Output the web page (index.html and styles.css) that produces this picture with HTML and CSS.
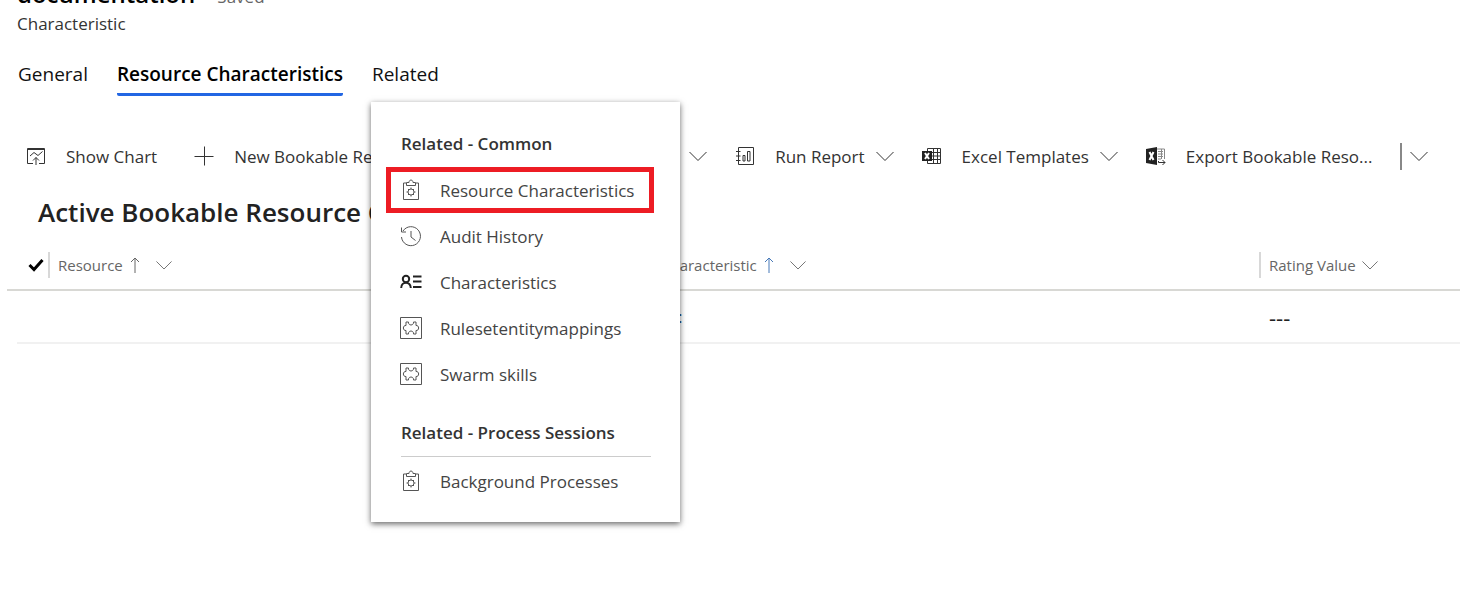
FILE: index.html
```html
<!DOCTYPE html>
<html lang="en">
<head>
<meta charset="utf-8">
<title>Characteristic</title>
<link rel="stylesheet" href="styles.css">
</head>
<body>
<svg class="defs" aria-hidden="true">
  <symbol id="chevron" viewBox="0 0 18 18"><path d="M.5 5l8.500 8.500L17.500 5"/></symbol>
  <symbol id="arrow-up" viewBox="0 0 10 18"><path d="M5 17V2M1 6l4-4 4 4"/></symbol>
  <symbol id="clipboard" viewBox="0 0 22 22"><path d="M6 4H3.500v16.500h15V4H16M6.500 6.500V3.500h2.500c0-1 .5-2.500 2-2.500s2 1.500 2 2.500h2.500v3z"/><circle cx="11" cy="13" r="3"/><path d="M11 8.500V10M11 16v1.500M6.500 13H8M14 13h1.500M8 10l1 1M13 15l1 1M14 10l-1 1M9 15l-1 1"/></symbol>
  <symbol id="puzzle" viewBox="0 0 22 22"><path d="M.5.500h21v21H.5z"/><path d="M6 5h2.500c-.5 4 5.500 4 5 0H16v3.500c3.500-.5 3.500 5.500 0 5V17h-2.500c.5-4-5.500-4-5 0H6v-3.500c-3.500.5-3.500-5.500 0-5z"/></symbol>
</svg>

<header class="record">
  <h1 class="record-title">documentation <span class="record-state">- Saved</span></h1>
  <p class="record-type">Characteristic</p>
</header>

<nav class="tabs">
  <button class="tab">General</button>
  <button class="tab tab-active">Resource Characteristics</button>
  <div class="tab-holder">
    <button class="tab" aria-expanded="true">Related</button>
    <div class="menu">
      <h2 class="menu-heading">Related - Common</h2>
      <button class="menu-item menu-item-marked"><svg class="menu-icon"><use href="#clipboard"/></svg>Resource Characteristics</button>
      <button class="menu-item"><svg class="menu-icon" viewBox="0 0 22 22"><path d="M3 6a9.500 9.500 0 1 1-1.500 6M1.500 2.500v4.500H6M11 6v6l4.500 3.500"/></svg>Audit History</button>
      <button class="menu-item"><svg class="menu-icon menu-icon-dark" viewBox="0 0 22 22"><circle cx="6" cy="8" r="3.200"/><path d="M1.200 17c0-7 9.600-7 9.600 0M13 5.500h8.500M13 10.500h8.500M13 16h8.500"/></svg>Characteristics</button>
      <button class="menu-item"><svg class="menu-icon"><use href="#puzzle"/></svg>Rulesetentitymappings</button>
      <button class="menu-item"><svg class="menu-icon"><use href="#puzzle"/></svg>Swarm skills</button>
      <h2 class="menu-heading menu-heading-ruled">Related - Process Sessions</h2>
      <button class="menu-item"><svg class="menu-icon"><use href="#clipboard"/></svg>Background Processes</button>
    </div>
  </div>
</nav>

<div class="commands">
  <button class="command command-plain"><svg class="command-icon" viewBox="0 0 20 20"><path d="M7 17.500H1.500v-15h17v15H13M1.500 3.500h17M4 10l4-3.500 4 3 4.500-4M10 19v-7.500M7 14.500l3-3 3 3"/></svg>Show Chart</button>
  <button class="command command-new"><svg class="command-icon" viewBox="0 0 20 20"><path d="M10.500.500v19M.5 10.500h19"/></svg><span class="command-label">New Bookable Resource Characteristic</span><svg class="chevron"><use href="#chevron"/></svg></button>
  <button class="command"><svg class="command-icon" viewBox="0 0 20 20"><path d="M3.500 1.500h15v17h-15zM1 5.500h4.500M1 10h4.500M1 14.500h4.500M8 9.500h2V15H8zM12.500 5.500h2.500V15h-2.500z"/></svg>Run Report<svg class="chevron"><use href="#chevron"/></svg></button>
  <button class="command"><svg class="command-icon" viewBox="0 0 20 20"><path d="M5.500 2.500h13v15h-13zM5.500 6.500h13M5.500 10h13M5.500 13.500h13M11.500 2v16M15.500 2v16"/><path class="solid" d="M0 5h10v10H0z"/><path class="knockout" d="M3 7l4 6M7 7l-4 6"/></svg>Excel Templates<svg class="chevron"><use href="#chevron"/></svg></button>
  <button class="command"><svg class="command-icon" viewBox="0 0 20 20"><path class="solid" d="M0 3l11-2v18L0 17z"/><path class="knockout" d="M3.500 6l4 8M7.500 6l-4 8"/><path class="fine" d="M11 3h7.500v10M12 5.500h5M12 8h5M12 10.500h5M12 13h3M15.500 3v10"/><path d="M12.500 15v1.500H19M16.500 14l2.500 2.500-2.500 2.500"/></svg>Export Bookable Reso...</button>
  <button class="command-more" aria-label="More export options"><svg class="chevron"><use href="#chevron"/></svg></button>
</div>

<h2 class="view-title">Active Bookable Resource Characteristics</h2>

<table class="grid">
  <thead>
    <tr>
      <th class="col-check"><button class="check" aria-label="Select all"><svg class="check-icon" viewBox="0 0 16 14"><path d="M1.500 7l4.500 4.500L14.500 2"/></svg></button></th>
      <th class="col-resource"><button class="sort">Resource<svg class="arrow"><use href="#arrow-up"/></svg><svg class="chevron chevron-small"><use href="#chevron"/></svg></button></th>
      <th class="col-characteristic"><button class="sort">Characteristic<svg class="arrow arrow-blue"><use href="#arrow-up"/></svg><svg class="chevron chevron-small"><use href="#chevron"/></svg></button></th>
      <th class="col-rating"><button class="sort sort-tight">Rating Value<svg class="chevron chevron-small"><use href="#chevron"/></svg></button></th>
    </tr>
  </thead>
  <tbody>
    <tr><td class="cell-check"></td><td></td><td class="cell-link"><a href="#">:</a></td><td class="cell-empty">---</td></tr>
  </tbody>
</table>
</body>
</html>
```
FILE: styles.css
```css
* { box-sizing: border-box; }
body {
  margin: 0;
  min-height: 100vh;
  background: #fff;
  color: #222;
  font-family: "Open Sans", "Noto Sans", sans-serif;
  font-size: 17px;
}
h1, h2, p { margin: 0; }
button {
  margin: 0;
  padding: 0;
  border: 0;
  background: none;
  color: inherit;
  font: inherit;
  text-align: left;
  white-space: nowrap;
}
svg { flex: none; fill: none; stroke: currentColor; }
.defs { display: none; }

.record { display: flow-root; padding-left: 17px; }
.record-title {
  margin-top: -22px;
  color: #000;
  font-size: 24px;
  font-weight: 600;
  line-height: 32px;
}
.record-state { margin-left: 6px; color: #666; font-size: 17px; font-weight: 400; }
.record-type { color: #333; font-size: 17px; line-height: 22px; }

.tabs { display: flex; gap: 29px; margin-top: 19px; padding-left: 18px; }
.tab {
  display: block;
  height: 42px;
  border-bottom: 3px solid transparent;
  color: #111;
  font-size: 19px;
  line-height: 40px;
}
.tab-active { border-color: #2266e3; border-radius: 2px; color: #000; font-weight: 600; }
.tab-holder { position: relative; }

.menu {
  position: absolute;
  z-index: 2;
  top: 48px;
  left: -1px;
  width: 309px;
  padding: 18px 26px 18px 15px;
  background: #fff;
  box-shadow: 0 2px 6px rgba(0, 0, 0, .6);
  color: #444;
}
.menu-heading { padding-left: 15px; color: #333; font-size: 17px; font-weight: 600; line-height: 47px; }
.menu-heading-ruled { margin: 12px 3px 1px 15px; padding: 0; border-bottom: 1px solid #ccc; }
.menu-item {
  display: flex;
  align-items: center;
  gap: 18px;
  width: 100%;
  height: 46px;
  padding-left: 14px;
  font-size: 17px;
}
.menu-item-marked { padding-left: 9px; border: 5px solid #ed1c24; }
.menu-icon { width: 22px; height: 22px; color: #555; }
.menu-icon-dark { color: #222; stroke-width: 2; }

.commands { display: flex; align-items: center; height: 40px; margin-top: 40px; padding-left: 26px; color: #333; }
.command { display: flex; align-items: center; margin-right: 28px; font-size: 17px; }
.command-plain { margin-right: 37px; }
.command-icon { width: 20px; height: 20px; margin-right: 20px; }
.command-new { width: 513px; }
.command-label { flex: 1; overflow: hidden; }
.solid { fill: #222; stroke: none; }
.knockout { stroke: #fff; stroke-width: 2; }
.fine { stroke: #888; }
.chevron { width: 18px; height: 18px; margin-left: 11px; }
.command-more { display: flex; align-items: center; height: 27px; border-left: 2px solid #888; }
.command-more .chevron { margin-left: 8px; }

.view-title { margin-top: 18px; padding-left: 38px; color: #222; font-size: 26px; font-weight: 600; line-height: 36px; }

.grid { width: calc(100% - 7px); margin: 10px 0 0 7px; border-spacing: 0; table-layout: fixed; }
.grid th { height: 51px; padding: 0; border-bottom: 2px solid #d8d8d4; color: #666; font-weight: 400; }
.grid td { height: 53px; padding: 0 0 0 10px; border-bottom: 2px solid #f1f1f1; }
.grid .cell-check {
  border: 0;
  background: linear-gradient(#f1f1f1, #f1f1f1) right bottom / calc(100% - 10px) 2px no-repeat;
}
.col-check { width: 41px; }
.col-resource { width: 603px; }
.col-rating { width: 201px; }
.check { display: block; padding-left: 21px; }
.check-icon { display: block; width: 16px; height: 14px; color: #000; stroke-width: 3; }
.sort { display: flex; align-items: center; height: 26px; padding-left: 8px; border-left: 2px solid #d8d8d8; font-size: 15px; }
.arrow { width: 10px; height: 18px; margin-left: 7px; }
.arrow-blue { color: #4779b8; }
.chevron-small { width: 16px; height: 16px; margin-left: 16px; }
.sort-tight .chevron-small { margin-left: 6px; }
.grid .cell-link { padding-left: 27px; }
.cell-link a { color: #174a7c; text-decoration: none; }
.grid .cell-empty { font-size: 22px; line-height: 24px; }
```
